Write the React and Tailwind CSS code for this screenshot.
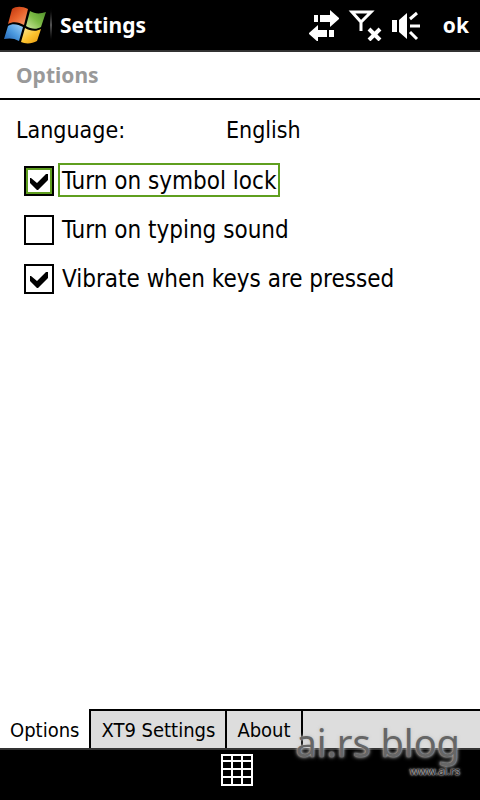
import { useState } from 'react'

const OPTIONS = [
  { id: 'symbol', label: 'Turn on symbol lock' },
  { id: 'sound', label: 'Turn on typing sound' },
  { id: 'vibrate', label: 'Vibrate when keys are pressed' },
]

const TABS = ['Options', 'XT9 Settings', 'About']

function WindowsLogo() {
  return (
    <svg width="44" height="44" viewBox="0 0 44 44" aria-hidden="true">
      <defs>
        <linearGradient id="red" x1="0" y1="0" x2="1" y2="1">
          <stop offset="0" stopColor="#b8300c" />
          <stop offset="0.5" stopColor="#e8622b" />
          <stop offset="1" stopColor="#f9a070" />
        </linearGradient>
        <linearGradient id="green" x1="1" y1="0" x2="0" y2="1">
          <stop offset="0" stopColor="#4f8f2a" />
          <stop offset="0.5" stopColor="#7dbb45" />
          <stop offset="1" stopColor="#cfe6a0" />
        </linearGradient>
        <linearGradient id="blue" x1="0" y1="1" x2="1" y2="0">
          <stop offset="0" stopColor="#1f5fae" />
          <stop offset="0.5" stopColor="#4d9be0" />
          <stop offset="1" stopColor="#a5d4f8" />
        </linearGradient>
        <linearGradient id="yellow" x1="1" y1="1" x2="0" y2="0">
          <stop offset="0" stopColor="#e8960c" />
          <stop offset="0.5" stopColor="#fcc430" />
          <stop offset="1" stopColor="#fdeb9a" />
        </linearGradient>
      </defs>
      <path d="M8 6 C12 3 18 3 24 6 L20 22 C15 19 9 18 4 21 Z" fill="url(#red)" />
      <path d="M26 8 C31 11 36 11 42 9 L37 24 C32 27 27 26 22 23 Z" fill="url(#green)" />
      <path d="M4 23 C8 20 14 21 19 24 L15 38 C10 35 5 35 0 36 Z" fill="url(#blue)" />
      <path d="M21 25 C26 28 32 29 37 26 L33 38 C28 41 21 41 17 39 Z" fill="url(#yellow)" />
    </svg>
  )
}

function StatusIcons() {
  return (
    <svg width="112" height="32" viewBox="0 0 112 32" fill="none" aria-hidden="true">
      {/* data connection */}
      <g fill="#fff">
        <path d="M5 6h4v7H5zM11 6h10V1l9 8v1l-9 8v-5H11z" />
        <path d="M20 21h5v7h-5zM18 21H9v-5l-9 8v1l9 8v-5h9z" />
      </g>
      {/* no signal */}
      <g stroke="#fff" strokeWidth="3">
        <path d="M43 3h19L52 13z M52 12v10" />
        <path d="M60 20l11 11M71 20L60 31" strokeWidth="4" />
      </g>
      {/* speaker */}
      <path d="M83 11h5v12h-5zM90 11l8-7v26l-8-7z" fill="#fff" />
      <path d="M101 10l7-6M101 17h10M101 23l7 7" stroke="#fff" strokeWidth="3" />
    </svg>
  )
}

function KeypadIcon() {
  return (
    <svg width="32" height="32" viewBox="0 0 32 32" stroke="#fff" strokeWidth="2" fill="none" aria-hidden="true">
      <path d="M1 1h30v30H1zM11 1v30M21 1v30M1 7h30M1 15h30M1 23h30" />
    </svg>
  )
}

function Option({ id, label, checked, focused, onToggle, onFocus }) {
  return (
    <div className="flex items-center gap-1">
      <div className="relative mt-0.5 h-[30px] w-[30px]">
        <input
          type="checkbox"
          id={id}
          checked={checked}
          onChange={onToggle}
          onFocus={onFocus}
          className={`block h-full w-full appearance-none border-2 border-black bg-white outline-none ${
            focused ? 'shadow-[inset_0_0_0_2px_#5f9f1f]' : ''
          }`}
        />
        {checked && (
          <svg
            className="pointer-events-none absolute inset-0"
            width="30"
            height="30"
            viewBox="0 0 30 30"
            aria-hidden="true"
          >
            <path d="M6 12h1l6 5L22 8h2v6L14 24h-1l-7-7z" fill="#000" />
          </svg>
        )}
      </div>
      <label
        htmlFor={id}
        className={`border-2 px-0.5 pt-0.5 text-2xl leading-7 ${focused ? 'border-[#5f9f1f]' : 'border-transparent'}`}
      >
        {label}
      </label>
    </div>
  )
}

export default function App() {
  const [checked, setChecked] = useState({ symbol: true, sound: false, vibrate: true })
  const [focused, setFocused] = useState('symbol')
  const [tab, setTab] = useState('Options')

  function toggle(id) {
    setChecked((prev) => ({ ...prev, [id]: !prev[id] }))
  }

  return (
    <div className="relative flex min-h-screen flex-col bg-white font-['DejaVu_Sans_Condensed','DejaVu_Sans',sans-serif] text-black">
      <header className="flex h-[52px] items-center border-b-2 border-[#333] bg-black pr-[11px] pl-1 font-['Noto_Sans',sans-serif] text-[21px] leading-7 font-bold text-white">
        <WindowsLogo />
        <div className="ml-0.5 h-9 w-0.5 bg-linear-to-b from-black via-[#555] to-black" />
        <h1 className="ml-2 flex-1">Settings</h1>
        <StatusIcons />
        <button type="button" className="ml-[22px]">ok</button>
      </header>

      <h2 className="border-b-2 border-black px-4 py-2 font-['Noto_Sans',sans-serif] text-[21px] leading-[30px] font-bold text-[#999]">
        Options
      </h2>

      <main className="flex-1 px-4 pt-[14px]">
        <div className="flex text-[23px] leading-8">
          <span className="w-[210px]">Language:</span>
          <span>English</span>
        </div>
        <div className="mt-[17px] flex flex-col gap-[15px] pl-2">
          {OPTIONS.map((o) => (
            <Option
              key={o.id}
              id={o.id}
              label={o.label}
              checked={checked[o.id]}
              focused={focused === o.id}
              onToggle={() => toggle(o.id)}
              onFocus={() => setFocused(o.id)}
            />
          ))}
        </div>
      </main>

      <nav className="flex text-xl">
        {TABS.map((t) => (
          <button
            key={t}
            type="button"
            onClick={() => setTab(t)}
            className={`h-[39px] border-t-2 px-2.5 ${
              t === tab ? 'border-transparent bg-white' : 'border-l-2 border-black bg-[#ddd]'
            }`}
          >
            {t}
          </button>
        ))}
        <div className="flex-1 border-t-2 border-l-2 border-black bg-[#ddd]" />
      </nav>

      <footer className="flex h-[52px] justify-center border-t-2 border-[#333] bg-black pt-1 pr-1.5">
        <button type="button" aria-label="Keyboard" className="h-8">
          <KeypadIcon />
        </button>
      </footer>

      <div className="pointer-events-none absolute right-5 bottom-5 flex flex-col items-end font-['Noto_Sans',sans-serif]">
        <span className="text-[38px] leading-10 text-[#666] text-shadow-[0_0_2px_#bbb,0_0_4px_#ccc]">ai.rs blog</span>
        <span className="text-[11px] leading-[18px] text-[#222] text-shadow-[0_0_1px_#ccc,0_0_2px_#ccc,0_0_3px_#ccc]">
          www.ai.rs
        </span>
      </div>
    </div>
  )
}
